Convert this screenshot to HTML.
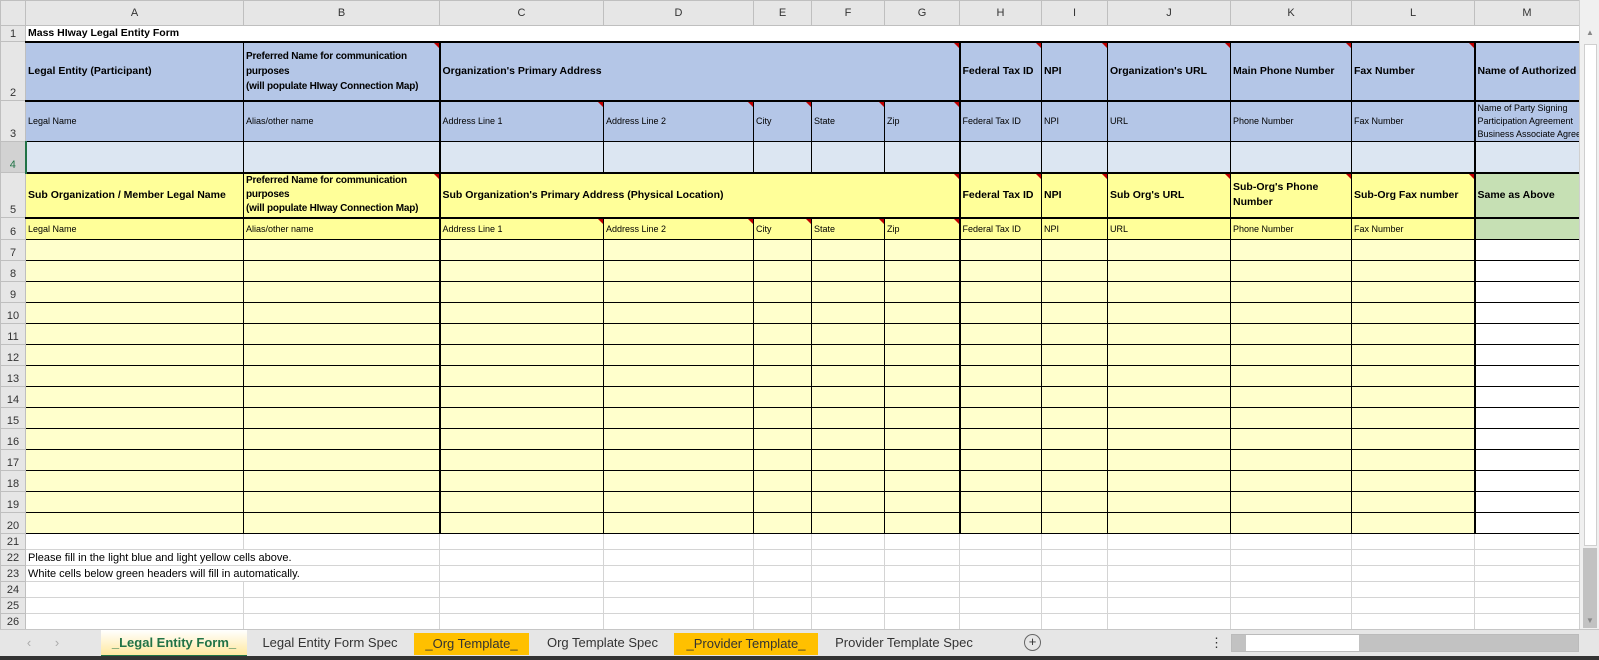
<!DOCTYPE html>
<html><head><meta charset="utf-8"><style>
body{margin:0;width:1599px;height:660px;overflow:hidden;background:#fff;font-family:"Liberation Sans",sans-serif;position:relative}
table{position:absolute;left:0;top:0;border-collapse:collapse;table-layout:fixed;width:1579px}
td{border:1px solid #d4d4d4;padding:0 2px;font-size:11px;white-space:nowrap;overflow:hidden;position:relative;color:#000}
tr.h td{background:#e6e6e6;text-align:center;color:#333;font-size:11px;border-color:#bfbfbf}
td.n{background:#e6e6e6;color:#333;text-align:center;vertical-align:bottom;border-color:#bfbfbf;padding:0;font-size:11px;line-height:13px}
.bh{background:#b4c6e7;font-weight:bold;border:1px solid #000;font-size:10.5px}
.bs{background:#b4c6e7;font-size:9px;border:1px solid #000}
.bl{background:#dce6f2;border:1px solid #000}
.yh{background:#ffff99;font-weight:bold;border:1px solid #000;font-size:10.5px}
.ys{background:#ffff99;font-size:9px;border:1px solid #000}
.yl{background:#ffffcc;border:1px solid #000}
.g{background:#c6e0b4;font-weight:bold;border:1px solid #000;font-size:10.5px}
.w{background:#fff;border:1px solid #000}
.tr2{border-top:2px solid #000}
.L{border-left:2px solid #000}
.c::after{content:"";position:absolute;right:0;top:0;border-top:5px solid #c00000;border-left:5px solid transparent}
.wr{line-height:15px;font-size:10px;letter-spacing:-0.2px}
tr.r{height:21px}
tr.s{height:16px}
#tabs{position:absolute;z-index:5;left:0;top:629px;width:1599px;height:27px;background:#e6e6e6;border-top:1px solid #c6c6c6;font-size:13px;color:#333}
#tabs div{position:absolute;top:0;height:25px;line-height:25px;text-align:center}
#bot{position:absolute;z-index:5;left:0;top:656px;width:1599px;height:4px;background:#333}
</style></head><body>
<table>
<colgroup><col style="width:25px"><col style="width:218px"><col style="width:196px"><col style="width:164px"><col style="width:150px"><col style="width:58px"><col style="width:73px"><col style="width:75px"><col style="width:82px"><col style="width:66px"><col style="width:123px"><col style="width:121px"><col style="width:123px"><col style="width:105px"></colgroup>
<tr class="h" style="height:25px"><td></td><td>A</td><td>B</td><td>C</td><td>D</td><td>E</td><td>F</td><td>G</td><td>H</td><td>I</td><td>J</td><td>K</td><td>L</td><td>M</td></tr>
<tr style="height:16px"><td class="n">1</td><td style="font-weight:bold;font-size:10.5px;border-color:#fff">Mass HIway Legal Entity Form</td><td style="border-color:#fff"></td><td style="border-color:#fff"></td><td style="border-color:#fff"></td><td style="border-color:#fff"></td><td style="border-color:#fff"></td><td style="border-color:#fff"></td><td style="border-color:#fff"></td><td style="border-color:#fff"></td><td style="border-color:#fff"></td><td style="border-color:#fff"></td><td style="border-color:#fff"></td><td style="border-color:#fff"></td></tr>
<tr style="height:59px"><td class="n">2</td><td class="bh tr2">Legal Entity (Participant)</td><td class="bh tr2 wr c">Preferred Name for communication<br>purposes<br>(will populate HIway Connection Map)</td><td class="bh tr2 L c" colspan="5">Organization's Primary Address</td><td class="bh tr2 L c">Federal Tax ID</td><td class="bh tr2 c">NPI</td><td class="bh tr2 c">Organization's URL</td><td class="bh tr2 c">Main Phone Number</td><td class="bh tr2 c">Fax Number</td><td class="bh tr2 L">Name of Authorized</td></tr>
<tr style="height:41px"><td class="n">3</td><td class="bs tr2">Legal Name</td><td class="bs tr2">Alias/other name</td><td class="bs tr2 L c">Address Line 1</td><td class="bs tr2 c">Address Line 2</td><td class="bs tr2 c">City</td><td class="bs tr2 c">State</td><td class="bs tr2 c">Zip</td><td class="bs tr2 L">Federal Tax ID</td><td class="bs tr2">NPI</td><td class="bs tr2">URL</td><td class="bs tr2">Phone Number</td><td class="bs tr2">Fax Number</td><td class="bs tr2 L" style="line-height:13px">Name of Party Signing<br>Participation Agreement<br>Business Associate Agreement</td></tr>
<tr style="height:31px"><td class="n" style="background:#d2d2d2;color:#217346;border-right:2px solid #217346">4</td><td class="bl"></td><td class="bl"></td><td class="bl L"></td><td class="bl"></td><td class="bl"></td><td class="bl"></td><td class="bl"></td><td class="bl L"></td><td class="bl"></td><td class="bl"></td><td class="bl"></td><td class="bl"></td><td class="bl L"></td></tr>
<tr style="height:45px"><td class="n">5</td><td class="yh tr2">Sub Organization / Member Legal Name</td><td class="yh tr2 wr c" style="line-height:14px">Preferred Name for communication<br>purposes<br>(will populate HIway Connection Map)</td><td class="yh tr2 L c" colspan="5">Sub Organization's Primary Address (Physical Location)</td><td class="yh tr2 L c">Federal Tax ID</td><td class="yh tr2 c">NPI</td><td class="yh tr2 c">Sub Org's URL</td><td class="yh tr2 c" style="line-height:15px">Sub-Org's Phone<br>Number</td><td class="yh tr2 c">Sub-Org Fax number</td><td class="g tr2 L">Same as Above</td></tr>
<tr style="height:22px"><td class="n">6</td><td class="ys tr2">Legal Name</td><td class="ys tr2">Alias/other name</td><td class="ys tr2 L c">Address Line 1</td><td class="ys tr2 c">Address Line 2</td><td class="ys tr2 c">City</td><td class="ys tr2 c">State</td><td class="ys tr2 c">Zip</td><td class="ys tr2 L">Federal Tax ID</td><td class="ys tr2">NPI</td><td class="ys tr2">URL</td><td class="ys tr2">Phone Number</td><td class="ys tr2">Fax Number</td><td class="g tr2 L"></td></tr>
<tr class="r"><td class="n">7</td><td class="yl"></td><td class="yl"></td><td class="yl L"></td><td class="yl"></td><td class="yl"></td><td class="yl"></td><td class="yl"></td><td class="yl L"></td><td class="yl"></td><td class="yl"></td><td class="yl"></td><td class="yl"></td><td class="w L"></td></tr>
<tr class="r"><td class="n">8</td><td class="yl"></td><td class="yl"></td><td class="yl L"></td><td class="yl"></td><td class="yl"></td><td class="yl"></td><td class="yl"></td><td class="yl L"></td><td class="yl"></td><td class="yl"></td><td class="yl"></td><td class="yl"></td><td class="w L"></td></tr>
<tr class="r"><td class="n">9</td><td class="yl"></td><td class="yl"></td><td class="yl L"></td><td class="yl"></td><td class="yl"></td><td class="yl"></td><td class="yl"></td><td class="yl L"></td><td class="yl"></td><td class="yl"></td><td class="yl"></td><td class="yl"></td><td class="w L"></td></tr>
<tr class="r"><td class="n">10</td><td class="yl"></td><td class="yl"></td><td class="yl L"></td><td class="yl"></td><td class="yl"></td><td class="yl"></td><td class="yl"></td><td class="yl L"></td><td class="yl"></td><td class="yl"></td><td class="yl"></td><td class="yl"></td><td class="w L"></td></tr>
<tr class="r"><td class="n">11</td><td class="yl"></td><td class="yl"></td><td class="yl L"></td><td class="yl"></td><td class="yl"></td><td class="yl"></td><td class="yl"></td><td class="yl L"></td><td class="yl"></td><td class="yl"></td><td class="yl"></td><td class="yl"></td><td class="w L"></td></tr>
<tr class="r"><td class="n">12</td><td class="yl"></td><td class="yl"></td><td class="yl L"></td><td class="yl"></td><td class="yl"></td><td class="yl"></td><td class="yl"></td><td class="yl L"></td><td class="yl"></td><td class="yl"></td><td class="yl"></td><td class="yl"></td><td class="w L"></td></tr>
<tr class="r"><td class="n">13</td><td class="yl"></td><td class="yl"></td><td class="yl L"></td><td class="yl"></td><td class="yl"></td><td class="yl"></td><td class="yl"></td><td class="yl L"></td><td class="yl"></td><td class="yl"></td><td class="yl"></td><td class="yl"></td><td class="w L"></td></tr>
<tr class="r"><td class="n">14</td><td class="yl"></td><td class="yl"></td><td class="yl L"></td><td class="yl"></td><td class="yl"></td><td class="yl"></td><td class="yl"></td><td class="yl L"></td><td class="yl"></td><td class="yl"></td><td class="yl"></td><td class="yl"></td><td class="w L"></td></tr>
<tr class="r"><td class="n">15</td><td class="yl"></td><td class="yl"></td><td class="yl L"></td><td class="yl"></td><td class="yl"></td><td class="yl"></td><td class="yl"></td><td class="yl L"></td><td class="yl"></td><td class="yl"></td><td class="yl"></td><td class="yl"></td><td class="w L"></td></tr>
<tr class="r"><td class="n">16</td><td class="yl"></td><td class="yl"></td><td class="yl L"></td><td class="yl"></td><td class="yl"></td><td class="yl"></td><td class="yl"></td><td class="yl L"></td><td class="yl"></td><td class="yl"></td><td class="yl"></td><td class="yl"></td><td class="w L"></td></tr>
<tr class="r"><td class="n">17</td><td class="yl"></td><td class="yl"></td><td class="yl L"></td><td class="yl"></td><td class="yl"></td><td class="yl"></td><td class="yl"></td><td class="yl L"></td><td class="yl"></td><td class="yl"></td><td class="yl"></td><td class="yl"></td><td class="w L"></td></tr>
<tr class="r"><td class="n">18</td><td class="yl"></td><td class="yl"></td><td class="yl L"></td><td class="yl"></td><td class="yl"></td><td class="yl"></td><td class="yl"></td><td class="yl L"></td><td class="yl"></td><td class="yl"></td><td class="yl"></td><td class="yl"></td><td class="w L"></td></tr>
<tr class="r"><td class="n">19</td><td class="yl"></td><td class="yl"></td><td class="yl L"></td><td class="yl"></td><td class="yl"></td><td class="yl"></td><td class="yl"></td><td class="yl L"></td><td class="yl"></td><td class="yl"></td><td class="yl"></td><td class="yl"></td><td class="w L"></td></tr>
<tr class="r"><td class="n">20</td><td class="yl"></td><td class="yl"></td><td class="yl L"></td><td class="yl"></td><td class="yl"></td><td class="yl"></td><td class="yl"></td><td class="yl L"></td><td class="yl"></td><td class="yl"></td><td class="yl"></td><td class="yl"></td><td class="w L"></td></tr>
<tr class="s"><td class="n">21</td><td></td><td></td><td></td><td></td><td></td><td></td><td></td><td></td><td></td><td></td><td></td><td></td><td></td></tr>
<tr class="s"><td class="n">22</td><td style="overflow:visible;border-right-color:transparent">Please fill in the light blue and light yellow cells above.</td><td></td><td></td><td></td><td></td><td></td><td></td><td></td><td></td><td></td><td></td><td></td><td></td></tr>
<tr class="s"><td class="n">23</td><td style="overflow:visible;border-right-color:transparent">White cells below green headers will fill in automatically.</td><td></td><td></td><td></td><td></td><td></td><td></td><td></td><td></td><td></td><td></td><td></td><td></td></tr>
<tr class="s"><td class="n">24</td><td></td><td></td><td></td><td></td><td></td><td></td><td></td><td></td><td></td><td></td><td></td><td></td><td></td></tr>
<tr class="s"><td class="n">25</td><td></td><td></td><td></td><td></td><td></td><td></td><td></td><td></td><td></td><td></td><td></td><td></td><td></td></tr>
<tr class="s"><td class="n">26</td><td></td><td></td><td></td><td></td><td></td><td></td><td></td><td></td><td></td><td></td><td></td><td></td><td></td></tr>
</table>
<div style="position:absolute;left:1579px;top:0;width:20px;height:629px;background:#f0f0f0;border-left:1px solid #d0d0d0">
<div style="position:absolute;left:4px;top:44px;width:11px;height:500px;background:#fff;border:1px solid #cfcfcf"></div>
<div style="position:absolute;left:3px;top:548px;width:14px;height:80px;background:#c2c2c2"></div>
<div style="position:absolute;left:6px;top:28px;font-size:8px;color:#888">▲</div>
<div style="position:absolute;left:6px;top:616px;font-size:8px;color:#888">▼</div>
</div>
<div id="tabs">
<div style="left:22px;width:14px;color:#aaa">‹</div><div style="left:50px;width:14px;color:#aaa">›</div>
<div style="left:101px;width:146px;background:linear-gradient(#fff,#ffe9a0);color:#217346;font-weight:bold;border-bottom:2px solid #217346">_Legal Entity Form_</div>
<div style="left:255px;width:150px">Legal Entity Form Spec</div>
<div style="left:414px;width:115px;background:#ffc000;top:3px;height:22px;line-height:22px">_Org Template_</div>
<div style="left:535px;width:135px">Org Template Spec</div>
<div style="left:674px;width:144px;background:#ffc000;top:3px;height:22px;line-height:22px">_Provider Template_</div>
<div style="left:826px;width:156px">Provider Template Spec</div>
<div style="left:1024px;top:4px;width:15px;height:15px;line-height:14px;border:1px solid #666;border-radius:50%">+</div>
<div style="left:1210px;width:10px">⋮</div>
<div style="left:1231px;top:4px;width:346px;height:16px;background:#c2c2c2;border:1px solid #bbb"></div>
<div style="left:1246px;top:5px;width:113px;height:16px;background:#fff"></div>
</div>
<div id="bot"></div>
</body></html>
